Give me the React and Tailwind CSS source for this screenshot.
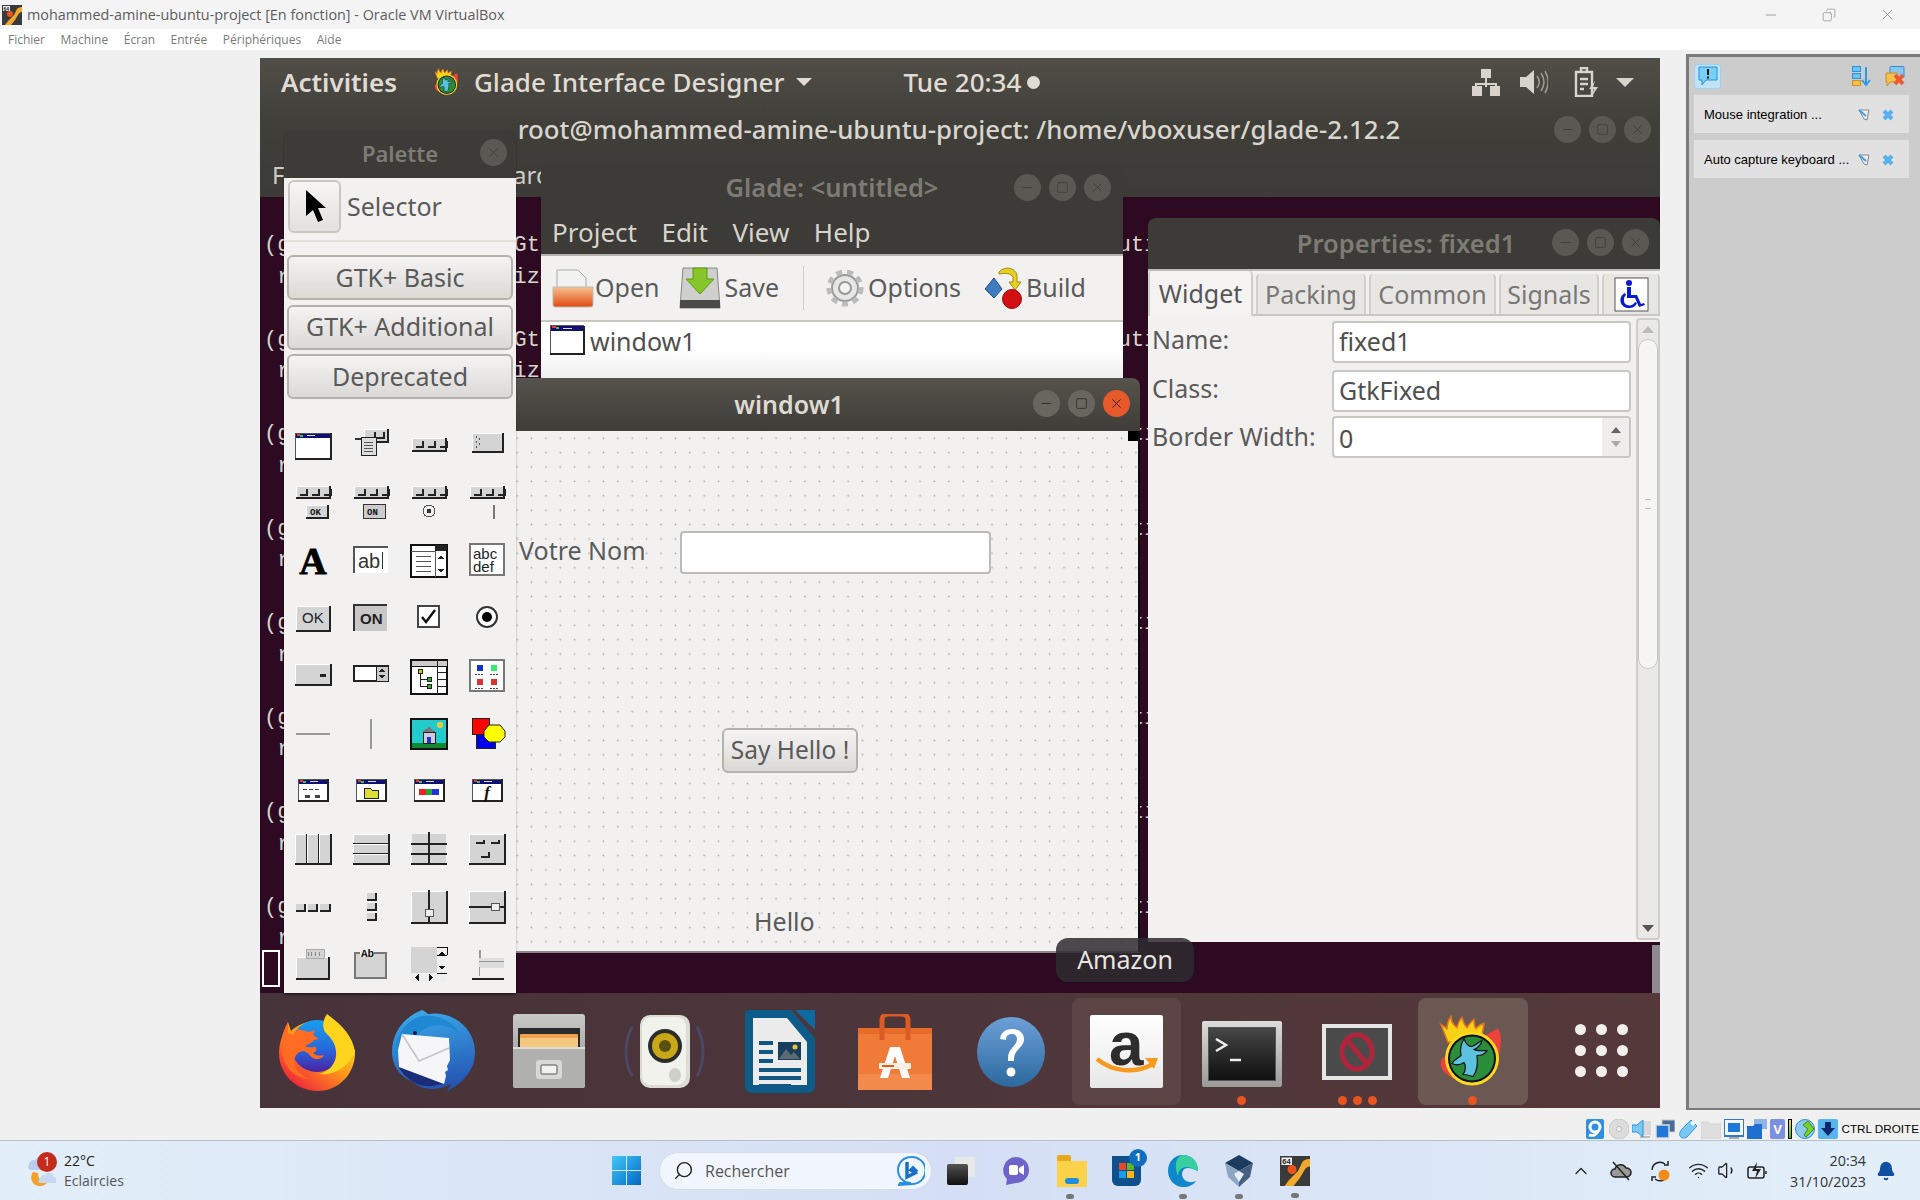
import React from 'react';
import { ChevronUp, Search, Wifi, Volume1, Bell, X, Minus, Square, Copy } from 'lucide-react';

const ubuntu = "font-['Noto_Sans',sans-serif]";
const win = "font-['Open_Sans',sans-serif]";

/* ---------- palette icons, drawn in a 44x44 box ---------- */
const Pi = ({ children }) => (
  <svg width="44" height="44" viewBox="0 0 44 44" shapeRendering="crispEdges">{children}</svg>
);
const Bev = ({ x, y, w, h }) => (
  <g>
    <rect x={x} y={y} width={w} height={h} fill="#d4d4d4" />
    <path d={`M${x} ${y + 0.5}H${x + w}M${x + 0.5} ${y}V${y + h}`} stroke="#fff" />
    <path d={`M${x} ${y + h}H${x + w}V${y}`} stroke="#222" strokeWidth="2" fill="none" />
  </g>
);
const Btns = ({ x, y, n = 3, gap = 12 }) => (
  <g>
    {Array.from({ length: n }).map((_, i) => (
      <path key={i} d={`M${x + i * gap + 7} ${y}V${y + 6}H${x + i * gap}`} stroke="#222" strokeWidth="1.6" fill="none" />
    ))}
  </g>
);
const Tb = ({ y = 5 }) => (
  <g>
    <Bev x={5} y={y} w={34} h={12} />
    <Btns x={9} y={y + 3} />
  </g>
);
const WinIco = ({ x = 4, y = 9, w = 36, h = 26, children }) => (
  <g>
    <rect x={x} y={y} width={w} height={h} fill="#fff" stroke="#555" />
    <path d={`M${x} ${y + h}H${x + w}V${y}`} stroke="#222" strokeWidth="2" fill="none" />
    <rect x={x + 1} y={y + 1} width={w - 2} height={4} fill="#101070" />
    <rect x={x + 2} y={y + 1} width={3} height={2} fill="#e33" />
    <rect x={x + 5} y={y + 2} width={3} height={2} fill="#3c3" />
    <rect x={x + 12} y={y + 2} width={8} height={1} fill="#ddd" />
    {children}
  </g>
);
const MonoT = ({ x, y, s = 12, fill = '#111', weight = 700, family = 'Liberation Mono', children }) => (
  <text x={x} y={y} fontSize={s} fill={fill} fontWeight={weight} fontFamily={family}>{children}</text>
);

const paletteIcons = [
  <WinIco key="win" />,
  <g key="menu"><Bev x={15} y={5} w={24} h={13} /><Btns x={19} y={8} n={2} gap={9} /><rect x={6} y={14} width={22} height={2} fill="#333" /><rect x={12} y={13} width={15} height={18} fill="#ddd" stroke="#222" /><path d="M15 18h9M15 21h9M15 24h9M15 27h9" stroke="#555" /></g>,
  <g key="tool"><Bev x={5} y={14} w={34} h={13} /><Btns x={9} y={17} /></g>,
  <g key="handle"><Bev x={7} y={9} w={31} h={19} /><path d="M11 12v2M11 17v2M11 22v2M14 14v2M14 19v2" stroke="#555" /></g>,

  <g key="tb-ok"><Tb /><Bev x={15} y={24} w={22} h={13} /><MonoT x={19} y={34} s={9}>OK</MonoT></g>,
  <g key="tb-on"><Tb /><rect x={14} y={23} width={22} height={14} fill="#ccc" stroke="#333" /><MonoT x={18} y={34} s={9}>ON</MonoT></g>,
  <g key="tb-radio"><Tb /><circle cx={22} cy={30} r={6} fill="#eee" stroke="#555" /><circle cx={22} cy={30} r={2.5} fill="#333" /></g>,
  <g key="tb-sep"><Tb /><rect x={28} y={24} width={2} height={14} fill="#777" /></g>,

  <text key="A" x={22} y={35} textAnchor="middle" fontSize={38} fontWeight={700} fontFamily="Liberation Serif" fill="#000" stroke="#000" strokeWidth="0.8">A</text>,
  <g key="entry"><rect x={5} y={8} width={34} height={26} fill="#fff" /><path d="M5 34V8H39" stroke="#555" strokeWidth="2" fill="none" /><text x={9} y={29} fontSize={20} fontFamily="Liberation Sans" fill="#333">ab</text><rect x={33} y={13} width={1.4} height={17} fill="#333" /></g>,
  <g key="combo"><rect x={4} y={6} width={36} height={32} fill="#fff" stroke="#111" strokeWidth="1.6" /><rect x={28} y={6} width={12} height={6} fill="#222" /><path d="M4 12H28M28 12V38M9 17h15M9 22h15M9 27h15M9 32h15" stroke="#555" /><path d="M31 20l3-4 3 4zM31 30l3 4 3-4z" fill="#222" /></g>,
  <g key="text"><rect x={5} y={5} width={34} height={31} fill="#fff" stroke="#777" strokeWidth="2" /><text x={8} y={20} fontSize={15} fontFamily="Liberation Sans" fill="#222">abc</text><text x={8} y={33} fontSize={15} fontFamily="Liberation Sans" fill="#222">def</text></g>,

  <g key="ok"><Bev x={5} y={9} w={34} h={25} /><MonoT x={11} y={26} s={15} weight={400} family="Liberation Sans" fill="#222">OK</MonoT></g>,
  <g key="on"><rect x={5} y={8} width={33} height={26} fill="#c8c8c8" /><path d="M5 34V8H38" stroke="#333" strokeWidth="2.5" fill="none" /><MonoT x={11} y={27} s={15} weight={700} family="Liberation Sans" fill="#222">ON</MonoT></g>,
  <g key="check"><rect x={11} y={9} width={21} height={21} fill="#fff" stroke="#444" strokeWidth="1.6" /><path d="M15 20l4 5 9-12" stroke="#111" strokeWidth="2.4" fill="none" shapeRendering="auto" /></g>,
  <g key="radio" shapeRendering="auto"><circle cx={22} cy={20} r={10} fill="#fff" stroke="#333" strokeWidth="2" /><circle cx={22} cy={20} r={5} fill="#000" /></g>,

  <g key="opt"><Bev x={4} y={10} w={36} h={21} /><rect x={29} y={20} width={6} height={3} fill="#222" /></g>,
  <g key="spin"><rect x={5} y={12} width={34} height={15} fill="#fff" stroke="#222" strokeWidth="1.6" /><rect x={27} y={12} width={12} height={15} fill="#ccc" stroke="#222" /><path d="M30 18l3-4 3 4zM30 21l3 4 3-4z" fill="#222" /></g>,
  <g key="tree"><rect x={4} y={6} width={36} height={34} fill="#fff" stroke="#111" strokeWidth="1.6" /><rect x={4} y={6} width={36} height={6} fill="#ccc" stroke="#111" /><path d="M30 6V40M30 18h10M30 25h10M30 32h10M13 18v14h8M13 25h8" stroke="#222" fill="none" /><rect x={11} y={15} width={4} height={4} fill="#cc0" stroke="#222" /><rect x={20} y={23} width={4} height={4} fill="#3a3" stroke="#222" /><rect x={20} y={30} width={4} height={4} fill="#3a3" stroke="#222" /></g>,
  <g key="icons"><rect x={5} y={6} width={34} height={31} fill="#fff" stroke="#777" strokeWidth="2" /><rect x={12} y={11} width={6} height={6} fill="#13c" /><rect x={26} y={11} width={6} height={6} fill="#3e6" /><rect x={12} y={25} width={6} height={6} fill="#d33" /><rect x={26} y={25} width={6} height={6} fill="#d33" /><path d="M10 20h9M25 20h9M10 34h9M25 34h9" stroke="#444" strokeDasharray="2 1" /></g>,

  <rect key="hsep" x={5} y={21} width={34} height={2} fill="#999" />,
  <rect key="vsep" x={21} y={7} width={2} height={30} fill="#999" />,
  <g key="img"><rect x={4} y={7} width={36} height={30} fill="#2cc" stroke="#111" strokeWidth="1.6" /><rect x={5} y={31} width={34} height={5} fill="#183" /><circle cx={33} cy={13} r={3} fill="#dc4" /><path d="M15 20l7-5 7 5z" fill="#777" /><rect x={16} y={20} width={12} height={11} fill="#ccd" stroke="#222" /><rect x={20} y={25} width={4} height={6} fill="#23c" /></g>,
  <g key="draw"><rect x={7} y={6} width={17} height={16} fill="#f00" stroke="#222" /><rect x={11} y={22} width={19} height={14} fill="#00e" stroke="#222" /><path d="M24 13h11l5 6v6l-5 5H24l-5-5v-6z" fill="#ff0" stroke="#222" shapeRendering="auto" /></g>,

  <WinIco key="d1" x={7} y={10} w={30} h={22}><path d="M12 20h4M18 20h4M24 20h4" stroke="#444" /><rect x={14} y={26} width={5} height={3} fill="#444" /><rect x={24} y={26} width={5} height={3} fill="#444" /></WinIco>,
  <WinIco key="d2" x={7} y={10} w={30} h={22}><path d="M15 19h6l2 2h6v8H15z" fill="#dd3" stroke="#222" /></WinIco>,
  <WinIco key="d3" x={7} y={10} w={30} h={22}><rect x={12} y={20} width={7} height={6} fill="#e22" /><rect x={19} y={20} width={6} height={6} fill="#2a3" /><rect x={25} y={20} width={7} height={6} fill="#23d" /></WinIco>,
  <WinIco key="d4" x={7} y={10} w={30} h={22}><text x={22} y={29} textAnchor="middle" fontSize={17} fontStyle="italic" fontWeight={700} fontFamily="Liberation Serif" fill="#111">f</text></WinIco>,

  <g key="hbox"><Bev x={4} y={7} w={12} h={30} /><Bev x={16} y={7} w={12} h={30} /><Bev x={28} y={7} w={12} h={30} /></g>,
  <g key="vbox"><Bev x={4} y={7} w={36} h={10} /><Bev x={4} y={17} w={36} h={10} /><Bev x={4} y={27} w={36} h={10} /></g>,
  <g key="table"><rect x={5} y={7} width={34} height={30} fill="#d4d4d4" /><path d="M4 17H40M4 27H40M4 37H40M22 5V37" stroke="#222" strokeWidth="2" /></g>,
  <g key="fixed"><Bev x={4} y={7} w={36} h={30} /><path d="M11 16h8v-3M26 16h8v-3M16 30h8v-5" stroke="#222" strokeWidth="2" fill="none" /></g>,

  <g key="hbb"><rect x={5} y={19} width={9} height={6} fill="#d4d4d4" /><path d="M5 26H14V19" stroke="#222" strokeWidth="2" fill="none" /><rect x={17} y={19} width={9} height={6} fill="#d4d4d4" /><path d="M17 26H26V19" stroke="#222" strokeWidth="2" fill="none" /><rect x={29} y={19} width={10} height={6} fill="#d4d4d4" /><path d="M29 26H39V19" stroke="#222" strokeWidth="2" fill="none" /></g>,
  <g key="vbb"><rect x={18} y={8} width={9} height={7} fill="#d4d4d4" /><path d="M18 15H27V8" stroke="#222" strokeWidth="2" fill="none" /><rect x={18} y={18} width={9} height={7} fill="#d4d4d4" /><path d="M18 25H27V18" stroke="#222" strokeWidth="2" fill="none" /><rect x={18} y={28} width={9} height={7} fill="#d4d4d4" /><path d="M18 35H27V28" stroke="#222" strokeWidth="2" fill="none" /></g>,
  <g key="vp"><Bev x={4} y={6} w={36} h={32} /><rect x={21} y={5} width={2} height={32} fill="#222" /><rect x={18} y={24} width={8} height={7} fill="#eee" stroke="#555" /></g>,
  <g key="hp"><Bev x={4} y={6} w={36} h={32} /><rect x={4} y={21} width={36} height={2} fill="#222" /><rect x={26} y={18} width={8} height={7} fill="#eee" stroke="#555" /></g>,

  <g key="nb"><Bev x={5} y={15} w={33} h={22} /><rect x={15} y={7} width={18} height={9} fill="#d4d4d4" stroke="#aaa" /><path d="M17 10v4M20 10v4M24 10v4M28 10v4" stroke="#888" /></g>,
  <g key="frame"><rect x={6} y={11} width={31} height={25} fill="#d4d4d4" stroke="#777" strokeWidth="1.6" /><rect x={11} y={6} width={14} height={9} fill="#f2f1f0" /><MonoT x={12} y={15} s={11}>Ab</MonoT></g>,
  <g key="sw"><rect x={4} y={5} width={26} height={26} fill="#d4d4d4" /><rect x={30} y={5} width={9} height={26} fill="#eee" /><rect x={4} y={31} width={36} height={9} fill="#eee" /><path d="M32 13l3-4 3 4zM32 24l3 4 3-4zM12 32v7l-4-3.500zM22 32v7l4-3.500z" fill="#111" /><path d="M30 5H40M40 5V13M30 13H40M30 31H40" stroke="#111" /></g>,
  <g key="align"><rect x={14} y={8} width={2} height={10} fill="#999" /><rect x={14} y={16} width={25} height={10} fill="#ddd" /><path d="M14 19H39M14 25V34" stroke="#999" /><rect x={7} y={36} width={32} height={2} fill="#222" /></g>,
];

/* ---------- small pieces of the desktop ---------- */
const WinBtn = ({ type, active, size = 27 }) => (
  <span
    className={`flex items-center justify-center rounded-full ${active && type === 'close' ? 'bg-[#e5592a]' : active ? 'bg-[#68665f]' : 'bg-[#5a5852]'}`}
    style={{ width: size, height: size }}
  >
    {type === 'min' && <Minus size={15} strokeWidth={1.5} color={active ? '#2f2e2a' : '#3f3e39'} />}
    {type === 'max' && <Square size={13} strokeWidth={1.5} color={active ? '#2f2e2a' : '#3f3e39'} />}
    {type === 'close' && <X size={15} strokeWidth={1.6} color={active ? '#3a1a0c' : '#3f3e39'} />}
  </span>
);

const GtkButton = ({ children, className }) => (
  <div className={`flex items-center justify-center rounded-md border-2 border-[#b4b2ad] bg-gradient-to-b from-[#f5f4f3] to-[#dbd9d6] text-[25px] text-[#5a5a5a] ${className}`}>
    {children}
  </div>
);

const GtkEntry = ({ children, className }) => (
  <div className={`flex items-center rounded border-2 border-[#c9c7c3] bg-white px-[5px] text-[25px] text-[#4f4f4f] ${className}`}>
    {children}
  </div>
);

const GladeGlobe = ({ size = 73 }) => (
  <svg width={size} height={size} viewBox="0 0 73 70">
    <path d="M62 12c6 10 2 30-6 42-8 12-28 12-38 8C8 58 2 50 6 42z" fill="#f0413a" />
    <path d="M12 26C8 16 6 10 5 8c3 2 5 3 6 5 0-5 1-9 4-13 0 6 3 9 6 11 1-4 2-7 5-10 1 4 2 7 5 10 2-3 4-6 7-8 0 4 0 7 2 9 2-3 5-4 8-5-1 5-1 9-3 14z" fill="#fbd116" stroke="#e8731a" strokeWidth="1.5" />
    <ellipse cx="36" cy="42" rx="27" ry="27" fill="#ffd820" />
    <ellipse cx="36" cy="42" rx="24" ry="24" fill="#111" />
    <ellipse cx="36" cy="42" rx="22" ry="22" fill="#2a8d3c" />
    <path d="M28 22c2 6 4 8 8 8 4-1 7-5 10-6-1 4-3 7-8 9 3 2 8 1 13 1-2 4-6 5-10 5 1 8 0 16-4 21-3-1-7-2-10-2 3-4 3-9 1-12-3 2-8 3-12 1 2-4 6-5 9-8-1-5-1-10 3-17z" fill="#5bc3e0" stroke="#111" strokeWidth="1.2" />
  </svg>
);

const VBoxIcon = ({ size = 20 }) => (
  <svg width={size} height={size} viewBox="0 0 20 20">
    <rect width="20" height="20" fill="#3a3a3a" />
    <path d="M20 2c-3 0-5 1-6 4l-2 4-6 6-3 4h6l4-5 3-5c1-2 2-3 4-3z" fill="#f0a92c" />
    <circle cx="8" cy="9" r="3" fill="#e8541a" />
    <rect x="1" y="1" width="7" height="5" fill="#eee" />
    <text x="1.500" y="5.500" fontSize="5" fontWeight="700" fontFamily="Liberation Sans" fill="#222">64</text>
  </svg>
);

/* ---------- dock icons ---------- */
const Firefox = () => (
  <svg width="78" height="78" viewBox="0 0 78 78">
    <defs>
      <linearGradient id="ff" x1="0.85" y1="0.1" x2="0.15" y2="0.9"><stop offset="0" stopColor="#ffe226" /><stop offset="0.45" stopColor="#ff9a18" /><stop offset="1" stopColor="#f0243c" /></linearGradient>
      <linearGradient id="ffb" x1="0.5" y1="0" x2="0.5" y2="1"><stop offset="0" stopColor="#17a0f0" /><stop offset="0.6" stopColor="#2a63d8" /><stop offset="1" stopColor="#4a22a0" /></linearGradient>
    </defs>
    <path d="M9 9l3 9C18 12 28 8 38 8c14 0 30 10 38 30 1 22-16 40-37 40C17 78 0 61 0 40 0 30 4 20 9 9z" fill="url(#ff)" />
    <circle cx="38" cy="33" r="26" fill="url(#ffb)" />
    <path d="M48 1c-4 6-5 12-2 18 6 6 12 12 11 24-1 9-8 16-17 18 16 2 30-8 36-22C74 22 60 10 48 1z" fill="#ffd41c" />
    <path d="M9 9c-5 8-7 20-6 30 2 16 14 27 28 27-12-4-18-14-15-22 2-4 5-6 9-6 6 2 6 7 12 8 5 0 7-2 8-4-4 1-8 1-11-2 3-1 4-3 3-6-4 0-8 1-11-1 3-2 7-3 9-6l5-1-6-4 2-5-6 2-11-3-5 6-5-2z" fill="#ff6c22" />
  </svg>
);
const Thunderbird = () => (
  <svg width="83" height="83" viewBox="0 0 83 83">
    <defs>
      <linearGradient id="tb" x1="0.4" y1="0" x2="0.6" y2="1"><stop offset="0" stopColor="#3aa8e8" /><stop offset="1" stopColor="#2350b0" /></linearGradient>
    </defs>
    <path d="M30 0c2 1 4 2 6 4 24-4 47 14 47 38 0 12-4 20-14 30l-14 10 4-8c-12 6-26 8-38-2C6 66 0 54 0 42 0 24 10 8 30 0z" fill="url(#tb)" />
    <path d="M4 40C4 22 16 10 30 6c14-2 30 4 38 18-8-8-20-10-28-8-8 2-14 6-18 14L12 26 6 50z" fill="#1e88d4" />
    <path d="M6 56c6 12 20 22 34 20l12-2L7 57z" fill="#1c2c78" />
    <path d="M10 24l47 4 1 22-3 6 1 4-3 2 1 4-2 8L7 57 6 40z" fill="#f6f6f8" />
    <path d="M10 24l17 27 30-13" stroke="#c4c4c8" strokeWidth="1.500" fill="none" />
    <circle cx="23" cy="23" r="2" fill="#10203c" />
  </svg>
);
const Files = () => (
  <svg width="74" height="76" viewBox="0 0 74 76">
    <defs>
      <linearGradient id="fi" x1="0" y1="0" x2="0" y2="1"><stop offset="0" stopColor="#c9c9c7" /><stop offset="1" stopColor="#8d8d8b" /></linearGradient>
    </defs>
    <rect x="1" y="0" width="72" height="74" rx="3" fill="url(#fi)" />
    <rect x="6" y="14" width="62" height="20" fill="#2b2b2b" />
    <rect x="8" y="20" width="58" height="15" rx="1" fill="#eea44f" />
    <rect x="8" y="24" width="58" height="11" fill="#f3c77e" />
    <rect x="1" y="33" width="72" height="41" rx="2" fill="#b0b0ae" />
    <rect x="1" y="33" width="72" height="2" fill="#dcdcdc" />
    <rect x="24" y="46" width="26" height="19" rx="3" fill="#d8d8d6" />
    <rect x="29" y="51" width="16" height="9" rx="1" fill="#f2f2f0" stroke="#555" />
  </svg>
);
const Speaker = () => (
  <svg width="81" height="73" viewBox="0 0 81 73">
    <path d="M8 12c-8 15-8 34 0 49M73 12c8 15 8 34 0 49" stroke="#4a4866" strokeWidth="3" fill="none" />
    <rect x="16" y="0" width="50" height="73" rx="10" fill="#dcdcd4" />
    <rect x="18" y="2" width="44" height="68" rx="9" fill="#f2f2ec" />
    <circle cx="41" cy="31" r="17" fill="#2c2c2c" />
    <circle cx="41" cy="31" r="13" fill="#c9a818" />
    <circle cx="41" cy="31" r="6" fill="#5a5010" />
    <ellipse cx="51" cy="60" rx="6" ry="7" fill="#d0d0ca" />
  </svg>
);
const Writer = () => (
  <svg width="70" height="83" viewBox="0 0 70 83">
    <path d="M4 0H46L70 28V76a7 7 0 0 1-7 7H7a7 7 0 0 1-7-7V4a4 4 0 0 1 4-4z" fill="#0c5b88" />
    <path d="M8 8H42L62 32V75H8z" fill="#ececec" />
    <path d="M50 0H70V20z" fill="#0c6aa0" />
    <path d="M14 31h14v4H14zM14 40h14v4H14zM14 49h14v4H14zM14 58h42v4H14zM14 66h42v4H14zM14 74h32v3H14z" fill="#12577f" />
    <rect x="33" y="32" width="23" height="18" fill="#18405c" />
    <path d="M34 49l7-10 5 6 3-3 6 7z" fill="#5d6a72" />
    <circle cx="50" cy="37" r="2.500" fill="#f0c040" />
  </svg>
);
const Store = () => (
  <svg width="74" height="76" viewBox="0 0 74 76">
    <path d="M0 14H74V76H0z" fill="#f07a38" />
    <path d="M0 14H74V20H0z" fill="#e76c2a" />
    <path d="M0 60H74V76H0z" fill="#f28a4c" />
    <path d="M24 26V6a6 6 0 0 1 6-6H44a6 6 0 0 1 6 6V26" stroke="#dc5a24" strokeWidth="5" fill="none" />
    <path d="M32 33h10l10 31H44l-7-22-7 22H22z" fill="#fff" />
    <rect x="21" y="49" width="32" height="6" rx="1" fill="#f6f0e4" />
    <rect x="24" y="51" width="12" height="2" fill="#e05a20" />
  </svg>
);
const Help = () => (
  <svg width="68" height="70" viewBox="0 0 68 70">
    <defs>
      <linearGradient id="he" x1="0" y1="0" x2="0" y2="1"><stop offset="0" stopColor="#6d9fd8" /><stop offset="1" stopColor="#2b699f" /></linearGradient>
    </defs>
    <ellipse cx="34" cy="35" rx="34" ry="35" fill="url(#he)" />
    <path d="M23 22c1-7 6-10 12-10 7 0 12 4 12 10 0 9-10 10-10 20v2h-6v-3c0-10 9-12 9-19 0-3-2-5-5-5-4 0-6 2-6 6z" fill="#fff" />
    <circle cx="34" cy="55" r="4.500" fill="#fff" />
  </svg>
);
const Amazon = () => (
  <div className="relative flex h-[73px] w-[73px] flex-col items-center rounded-[2px] bg-gradient-to-b from-white to-[#e8e8e8]">
    <span className="font-['Liberation_Sans',sans-serif] text-[62px] leading-[58px] font-bold text-[#2d2d2d]">a</span>
    <svg className="absolute bottom-[12px] left-[5px]" width="64" height="20" viewBox="0 0 64 20">
      <path d="M2 3c16 13 38 15 56 5" stroke="#f79a1e" strokeWidth="4.500" fill="none" />
      <path d="M50 2l13 0-4 11z" fill="#f79a1e" />
    </svg>
  </div>
);
const Terminal = () => (
  <div className="mt-[4px] flex h-[66px] w-[80px] rounded-[2px] bg-gradient-to-b from-[#dcdcdc] to-[#9a9a9a] p-[6px]">
    <div className="relative h-full w-full border border-[#555] bg-gradient-to-b from-[#474747] to-[#111]">
      <svg className="absolute top-[10px] left-[6px]" width="30" height="30" viewBox="0 0 30 30">
        <path d="M1 1l10 6-10 6" stroke="#eee" strokeWidth="2.500" fill="none" />
        <path d="M15 22h11" stroke="#eee" strokeWidth="2.500" />
      </svg>
    </div>
  </div>
);
const NoEntry = () => (
  <div className="flex h-[56px] w-[70px] items-center justify-center bg-[#4b4b4b] shadow-[inset_0_0_0_4px_#e6e6e6]">
    <svg width="36" height="40" viewBox="0 0 36 40">
      <ellipse cx="18" cy="20" rx="15" ry="17" stroke="#b0243c" strokeWidth="5" fill="none" />
      <path d="M8 8l20 24" stroke="#b0243c" strokeWidth="5" />
    </svg>
  </div>
);
const AppGrid = () => (
  <div className="grid grid-cols-3 gap-x-[10px] gap-y-[10px]">
    {Array.from({ length: 9 }).map((_, i) => (
      <span key={i} className="h-[11px] w-[11px] rounded-full bg-[#f2efec]" />
    ))}
  </div>
);

const DockItem = ({ children, hl, dots = 0 }) => (
  <div className={`relative mt-[5px] mx-[3px] flex h-[107px] w-[109.500px] shrink-0 items-center justify-center rounded-lg ${hl}`}>
    {children}
    {dots > 0 && (
      <div className="absolute bottom-0 flex gap-[6px]">
        {Array.from({ length: dots }).map((_, i) => (
          <span key={i} className="h-[9px] w-[9px] rounded-full bg-[#e95420]" />
        ))}
      </div>
    )}
  </div>
);

/* ---------- Glade toolbar art ---------- */
const OpenIcon = () => (
  <svg width="42" height="42" viewBox="0 0 42 42">
    <defs><linearGradient id="op" x1="0" y1="0" x2="0" y2="1"><stop offset="0" stopColor="#f9c090" /><stop offset="1" stopColor="#e04a10" /></linearGradient></defs>
    <path d="M5 3H26L34 11V24H5z" fill="#f2f2f0" stroke="#aaa" />
    <path d="M1 20H41V38a2 2 0 0 1-2 2H3a2 2 0 0 1-2-2z" fill="url(#op)" stroke="#bbb" />
  </svg>
);
const SaveIcon = () => (
  <svg width="42" height="44" viewBox="0 0 42 44">
    <path d="M4 2H38L41 42H1z" fill="#cfcfcd" stroke="#888" />
    <path d="M1 34H41V42H1z" fill="#4a4a48" />
    <path d="M14 2H28V13H35L21 28 7 13H14z" fill="#86c62a" stroke="#5e9a12" />
  </svg>
);
const GearIcon = () => (
  <svg width="38" height="40" viewBox="0 0 38 40">
    <circle cx="19" cy="20" r="13" fill="#e6e6e4" stroke="#999" strokeWidth="2" />
    <circle cx="19" cy="20" r="16" fill="none" stroke="#bbb" strokeWidth="5" strokeDasharray="6 5" />
    <circle cx="19" cy="20" r="6" fill="#f4f4f2" stroke="#999" strokeWidth="2" />
  </svg>
);
const BuildIcon = () => (
  <svg width="38" height="44" viewBox="0 0 38 44">
    <path d="M9 12L0 23l9 9 8-9z" fill="#3f7cc0" stroke="#1f4f88" />
    <path d="M14 6c5-6 16-5 18 3v7h4l-6 8-6-8h4V11c-2-4-8-4-14-3z" fill="#e8d020" stroke="#a08c10" />
    <circle cx="27" cy="33" r="9.500" fill="#d40f14" stroke="#8c0a0e" />
  </svg>
);
const MiniWin = () => (
  <svg width="36" height="32" viewBox="0 0 36 32" shapeRendering="crispEdges">
    <rect x="1" y="1" width="33" height="28" fill="#fff" stroke="#555" />
    <path d="M1 30H35V2" stroke="#222" strokeWidth="2" fill="none" />
    <rect x="2" y="2" width="32" height="5" fill="#101070" />
    <rect x="3" y="2" width="4" height="2" fill="#e33" />
    <rect x="7" y="3" width="3" height="2" fill="#3c3" />
    <rect x="14" y="4" width="9" height="1" fill="#ddd" />
  </svg>
);

/* ---------- VirtualBox status strip icons, 20x20 ---------- */
const statusIcons = [
  <g key="hd"><rect width="18" height="20" rx="2" fill="#2f8fe0" /><circle cx="9" cy="8" r="5" fill="none" stroke="#fff" strokeWidth="3" /><path d="M12 12c-1 4-5 5-9 4" stroke="#fff" strokeWidth="3" fill="none" /></g>,
  <g key="cd"><circle cx="10" cy="10" r="10" fill="#dcdcdc" stroke="#c8c8c8" /><circle cx="10" cy="10" r="2.500" fill="#f4f4f4" stroke="#bbb" /></g>,
  <g key="audio"><rect x="9" y="2" width="10" height="14" fill="#d8d8d8" /><path d="M8 18h10" stroke="#bbb" strokeWidth="2" /><path d="M0 6h5l6-5v17l-6-5H0z" fill="#7cc8f4" stroke="#2f8fe0" /></g>,
  <g key="net"><rect x="7" y="1" width="13" height="12" fill="#4a6a98" stroke="#ccc" /><rect x="1" y="6" width="13" height="13" fill="#1f78d8" stroke="#ddd" strokeWidth="1.500" /></g>,
  <g key="usb"><path d="M13 1l6 6-10 11c-3 2-6 1-7-1s0-5 2-7z" fill="#7cc8f4" stroke="#3a98e0" /><rect x="13" y="3" width="4" height="3" fill="#fff" transform="rotate(45 15 4)" /></g>,
  <path key="folder" d="M0 3h7l2 2h11v15H0z" fill="#dedede" stroke="#d0d0d0" />,
  <g key="display"><rect x="0" y="0" width="20" height="17" fill="#f6f6f6" stroke="#2f78d0" strokeWidth="2" /><rect x="4" y="4" width="12" height="9" fill="#1f78d8" /><path d="M5 19h10" stroke="#aaa" strokeWidth="2" /></g>,
  <g key="folders"><rect x="7" y="0" width="13" height="10" fill="#8fb4e8" /><path d="M0 7h6l2-2h7v15H0z" fill="#1f6fd0" /></g>,
];

const termRows = Array.from({ length: 8 });

export default function App() {
  return (
    <div className="flex h-[1200px] w-[1920px] flex-col overflow-hidden bg-[#f0f0f0]">
      {/* VirtualBox title bar */}
      <div className={`flex h-[29px] shrink-0 items-center bg-[#f4f4f4] pl-[2px] ${win}`}>
        <VBoxIcon />
        <span className="ml-[5px] text-[14.400px] text-[#5c5c5c]">mohammed-amine-ubuntu-project [En fonction] - Oracle VM VirtualBox</span>
        <div className="ml-auto flex items-center gap-[43px] pr-[24px] text-[#777]">
          <Minus size={16} strokeWidth={1} />
          <Copy size={14} strokeWidth={1} className="-scale-x-100" />
          <X size={17} strokeWidth={1} />
        </div>
      </div>

      {/* menu */}
      <div className={`flex h-[21px] shrink-0 items-center gap-[15.500px] bg-white pl-[8px] text-[12px] text-[#7a7a7a] ${win}`}>
        <span>Fichier</span>
        <span>Machine</span>
        <span>Écran</span>
        <span>Entrée</span>
        <span>Périphériques</span>
        <span>Aide</span>
      </div>

      {/* body */}
      <div className="flex h-[1060px] shrink-0 pl-[260px]">
        {/* VM screen */}
        <div className={`relative mt-[8px] flex h-[1050px] w-[1400px] shrink-0 flex-col overflow-hidden ${ubuntu}`}>
          {/* top bar and terminal title */}
          <div className="h-[139px] shrink-0 bg-gradient-to-b from-[#514e47] via-[#3f3e39] to-[#3c3b37]">
            <div className="flex h-[48px] items-center text-[#e0dcd4]">
              <span className="ml-[21px] text-[26px] font-semibold">Activities</span>
              <span className="ml-[36px]"><GladeGlobe size={28} /></span>
              <span className="ml-[13px] text-[26px] font-medium">Glade Interface Designer</span>
              <span className="ml-[11px] h-0 w-0 border-x-[8px] border-t-[8px] border-x-transparent border-t-[#e0dcd4]" />
              <span className="ml-[92px] text-[26px] font-medium">Tue 20:34</span>
              <span className="ml-[6px] h-[13px] w-[13px] rounded-full bg-[#e0dcd4]" />
              <div className="ml-auto flex items-center pr-[26px]">
                <svg width="28" height="27" viewBox="0 0 28 27" fill="#d8d4cc"><rect x="9" y="0" width="10" height="9" /><path d="M13 9h2v5h10v4h-2v-2H15v2h-2v-2H5v2H3v-4h10z" /><rect x="0" y="17" width="10" height="10" /><rect x="18" y="17" width="10" height="10" /></svg>
                <svg className="ml-[20px]" width="28" height="26" viewBox="0 0 28 26" fill="#d8d4cc"><path d="M0 8h6l8-7v24l-8-7H0z" /><path d="M17 7c3 4 3 8 0 12M21 4c4 6 4 12 0 18M25 2c4 7 4 15 0 22" stroke="#a09c94" strokeWidth="1.500" fill="none" /></svg>
                <svg className="ml-[25px]" width="26" height="30" viewBox="0 0 26 30" fill="none" stroke="#d8d4cc" strokeWidth="2.400"><path d="M3 5h16v24H3zM8 5V1h6v4M7 12h8M7 17h8M7 22h4" /><path d="M22 14l-6 8h5l-2 7 6-9h-5z" fill="#d8d4cc" stroke="none" /></svg>
                <span className="ml-[17px] h-0 w-0 border-x-[9px] border-t-[9px] border-x-transparent border-t-[#d8d4cc]" />
              </div>
            </div>
            <div className="relative flex h-[46px] items-center justify-center text-[25.800px] font-medium text-[#d9d5cc]">
              <span className="mr-[2px]">root@mohammed-amine-ubuntu-project: /home/vboxuser/glade-2.12.2</span>
              <div className="absolute top-[10px] right-[9px] flex gap-[8px]">
                <WinBtn type="min" />
                <WinBtn type="max" />
                <WinBtn type="close" />
              </div>
            </div>
            <div className="flex h-[45px] items-center pl-[12px] text-[24px] text-[#d0ccc4]">
              <span>File</span>
              <span className="ml-[176px]">Search</span>
            </div>
          </div>

          {/* terminal output, mostly covered by windows */}
          <div className="h-[796px] shrink-0 overflow-hidden bg-[#2d0922] pt-[33px] pl-[4px] font-['Liberation_Mono',monospace] text-[21.900px] leading-[31.500px] whitespace-pre text-[#d3d7cf]">
            {termRows.map((_, i) => (
              <div key={i}>
                <div>(glade-2:1234567): Gtk-WARNING **: Could not load a pixbuf from /utils</div>
                <div> requested pixbuf size</div>
                <div>&nbsp;</div>
              </div>
            ))}
          </div>

          {/* dock */}
          <div className="flex h-[115px] shrink-0 bg-gradient-to-r from-[#47333a] via-[#4d363a] to-[#55393a]">
            <DockItem><Firefox /></DockItem>
            <DockItem><Thunderbird /></DockItem>
            <DockItem><Files /></DockItem>
            <DockItem><Speaker /></DockItem>
            <DockItem><Writer /></DockItem>
            <DockItem><Store /></DockItem>
            <DockItem><Help /></DockItem>
            <DockItem hl="bg-[#5d4545]"><Amazon /></DockItem>
            <DockItem dots={1}><Terminal /></DockItem>
            <DockItem dots={3}><NoEntry /></DockItem>
            <DockItem hl="bg-[#6c5853]" dots={1}><GladeGlobe /></DockItem>
            <div className="ml-[13px] flex h-[115px] w-[115px] items-center justify-center"><AppGrid /></div>
          </div>

          {/* terminal scrollbar and cursor */}
          <div className="absolute top-[887px] right-0 h-[48px] w-[8px] bg-[#8f8a8f]" />
          <div className="absolute top-[892px] left-[2px] h-[37px] w-[18px] border-2 border-white" />

          {/* window1 */}
          <div className="absolute top-[320px] left-[178px] flex h-[575px] w-[702px] flex-col overflow-hidden rounded-t-lg">
            <div className="relative flex h-[53px] shrink-0 items-center justify-center bg-gradient-to-b from-[#56534c] to-[#3e3d38]">
              <span className="text-[25px] font-semibold text-[#dfdbd2]">window1</span>
              <div className="absolute top-[12px] right-[10px] flex gap-[8px]">
                <WinBtn type="min" active />
                <WinBtn type="max" active />
                <WinBtn type="close" active />
              </div>
            </div>
            <div className="relative flex-1 border-r-2 border-b-2 border-r-[#0c0c0c] border-b-[#888] bg-[#f2f1f0] bg-[radial-gradient(circle,#b0b0b0_0.800px,transparent_1.100px)] bg-[size:14.400px_14.400px] text-[25px] text-[#5a5a5a]">
              <div className="absolute top-0 right-0 h-[10px] w-[10px] bg-black" />
              <span className="absolute top-[101px] left-[81px]">Votre Nom</span>
              <div className="absolute top-[100px] left-[242px] h-[43px] w-[311px] rounded border-2 border-[#bdbbb7] bg-white" />
              <GtkButton className="absolute top-[297px] left-[284px] h-[45px] w-[136px] !text-[24.500px]">Say Hello !</GtkButton>
              <span className="absolute top-[472px] left-[316px]">Hello</span>
            </div>
          </div>

          {/* Glade main window */}
          <div className="absolute top-[105px] left-[281px] flex h-[215px] w-[582px] flex-col overflow-hidden rounded-t-lg">
            <div className="relative flex h-[48px] shrink-0 items-center justify-center bg-[#3c3b37] pt-[1px] text-[25.500px] font-semibold text-[#7d7b74]">
              Glade: &lt;untitled&gt;
              <div className="absolute top-[11px] right-[12px] flex gap-[8px]">
                <WinBtn type="min" />
                <WinBtn type="max" />
                <WinBtn type="close" />
              </div>
            </div>
            <div className="flex h-[43px] shrink-0 items-center gap-[24.500px] bg-[#3c3b37] pl-[11px] text-[26px] text-[#d8d4cb]">
              <span>Project</span>
              <span>Edit</span>
              <span>View</span>
              <span>Help</span>
            </div>
            <div className="flex h-[68px] shrink-0 items-center border-t-2 border-b-2 border-t-[#b5b3ae] border-b-[#c9c7c3] bg-[#f2f1f0] pl-[11px] text-[25px] text-[#5a5a5a]">
              <OpenIcon />
              <span className="ml-[1px]">Open</span>
              <span className="ml-[20px]"><SaveIcon /></span>
              <span className="ml-[3px]">Save</span>
              <span className="ml-[24px] h-[44px] w-[1px] bg-[#cfcdc9]" />
              <span className="ml-[22px]"><GearIcon /></span>
              <span className="ml-[4px]">Options</span>
              <span className="ml-[24px]"><BuildIcon /></span>
              <span className="ml-[3px]">Build</span>
            </div>
            <div className="flex flex-1 items-start bg-gradient-to-b from-white via-white to-[#eeeeee] pt-[2px] pl-[8px] text-[25px] text-[#4f4f4f]">
              <MiniWin />
              <span className="ml-[5px] leading-[34px]">window1</span>
            </div>
          </div>

          {/* Palette */}
          <div className="absolute top-[72px] left-[24px] flex h-[863px] w-[232px] flex-col overflow-hidden rounded-t-lg shadow-[0_2px_2px_rgba(0,0,0,.4)]">
            <div className="relative flex h-[48px] shrink-0 items-center justify-center bg-[#3c3b37] pb-[2px] text-[22px] font-semibold text-[#7d7b74]">
              Palette
              <div className="absolute top-[9px] right-[9px]"><WinBtn type="close" /></div>
            </div>
            <div className="flex-1 bg-[#f2f1f0] text-[#5a5a5a]">
              <div className="flex h-[64px] items-center border-b-2 border-[#e2e0dd] pb-[5px] pl-[4px]">
                <div className="flex h-[53px] w-[53px] items-center justify-center rounded-md border-2 border-[#c9c7c3] bg-gradient-to-b from-[#f6f5f4] to-[#e3e1de]">
                  <svg width="24" height="36" viewBox="0 0 24 36"><path d="M3 1v26l7-6 5 12 5-2-5-12h8z" fill="#000" /></svg>
                </div>
                <span className="ml-[6px] text-[25px]">Selector</span>
              </div>
              <div className="flex flex-col gap-[4.500px] px-[3px] pt-[13px]">
                <GtkButton className="h-[45px]">GTK+ Basic</GtkButton>
                <GtkButton className="h-[45px]">GTK+ Additional</GtkButton>
                <GtkButton className="h-[45px]">Deprecated</GtkButton>
              </div>
              <div className="grid grid-cols-4 auto-rows-[57.600px] pt-[18px]">
                {paletteIcons.map((ic, i) => (
                  <div key={i} className="flex h-[57.600px] items-center justify-center"><Pi>{ic}</Pi></div>
                ))}
              </div>
            </div>
          </div>

          {/* Properties */}
          <div className="absolute top-[160px] left-[888px] flex h-[724px] w-[512px] flex-col overflow-hidden rounded-t-lg">
            <div className="relative flex h-[51px] shrink-0 items-center justify-center bg-[#3c3b37] pl-[4px] text-[25.500px] font-semibold text-[#7d7b74]">
              Properties: fixed1
              <div className="absolute top-[11px] right-[11px] flex gap-[8px]">
                <WinBtn type="min" />
                <WinBtn type="max" />
                <WinBtn type="close" />
              </div>
            </div>
            <div className="flex flex-1 flex-col bg-[#f2f1f0] text-[25px] text-[#5a5a5a]">
              <div className="flex h-[47px] shrink-0 items-end gap-[3px] border-t-2 border-b-2 border-t-[#bdbbb7] border-b-[#c9c7c3] text-[#777]">
                <div className="flex h-[45px] w-[105px] -mb-[2px] items-center justify-center rounded-t border-x-2 border-[#d0cec9] bg-[#f4f3f2] pt-[1px] text-[#555]">Widget</div>
                <div className="flex h-[40px] w-[110px] items-center justify-center rounded-t border-x-2 border-[#d0cec9] bg-[#e8e6e3] pt-[1px]">Packing</div>
                <div className="flex h-[40px] w-[127px] items-center justify-center rounded-t border-x-2 border-[#d0cec9] bg-[#e8e6e3] pt-[1px]">Common</div>
                <div className="flex h-[40px] w-[100px] items-center justify-center rounded-t border-x-2 border-[#d0cec9] bg-[#e8e6e3] pt-[1px]">Signals</div>
                <div className="flex h-[40px] flex-1 items-center justify-center rounded-t border-x-2 border-[#d0cec9] bg-[#e8e6e3]">
                  <svg width="35" height="35" viewBox="0 0 35 35">
                    <rect x="1" y="1" width="33" height="33" fill="#fff" stroke="#555" />
                    <circle cx="15" cy="6" r="3" fill="#0a1ad0" />
                    <path d="M13 10h4v8h6l4 9 3-1 1 2-6 2-4-9h-8zM11 16c-8 4-5 16 5 15 4 0 6-3 7-5l-2-1c-2 5-12 5-11-3 0-2 1-3 2-4z" fill="#0a1ad0" />
                  </svg>
                </div>
              </div>
              <div className="flex flex-1">
                <div className="flex-1 pt-[4px] pl-[4px]">
                  <div className="flex h-[49px] items-start"><span className="w-[180px] leading-[38px]">Name:</span><GtkEntry className="mt-[1px] h-[42px] w-[299px]">fixed1</GtkEntry></div>
                  <div className="flex h-[49px] items-start"><span className="w-[180px] leading-[38px]">Class:</span><GtkEntry className="mt-[1px] h-[42px] w-[299px]">GtkFixed</GtkEntry></div>
                  <div className="-mt-[2px] flex h-[49px] items-start">
                    <span className="w-[180px] leading-[40px]">Border Width:</span>
                    <div className="flex h-[42px] w-[299px] items-stretch overflow-hidden rounded border-2 border-[#c9c7c3] bg-white">
                      <span className="flex-1 pl-[5px] leading-[40px] text-[#4f4f4f]">0</span>
                      <div className="flex w-[27px] flex-col items-center justify-center gap-[8px] bg-[#eeedeb]">
                        <span className="h-0 w-0 border-x-[5px] border-b-[6px] border-x-transparent border-b-[#666]" />
                        <span className="h-0 w-0 border-x-[5px] border-t-[6px] border-x-transparent border-t-[#aaa]" />
                      </div>
                    </div>
                  </div>
                </div>
                <div className="mt-[2px] mb-[2px] flex w-[24px] flex-col items-center rounded border-2 border-[#d0cec9] bg-[#ebe9e7] pt-[6px]">
                  <span className="h-0 w-0 border-x-[6px] border-b-[7px] border-x-transparent border-b-[#bbb]" />
                  <div className="mt-[6px] flex h-[330px] w-[20px] items-center justify-center rounded-full border border-[#c9c7c3] bg-[#f6f5f4] text-[8px] leading-[3px] text-[#aaa]">
                    <span className="h-[10px] w-[6px] border-y border-[#bbb]" />
                  </div>
                  <span className="mt-auto mb-[6px] h-0 w-0 border-x-[6px] border-t-[7px] border-x-transparent border-t-[#555]" />
                </div>
              </div>
            </div>
          </div>

          {/* dock tooltip */}
          <div className="absolute top-[880px] left-[796px] flex h-[44px] w-[138px] items-center justify-center rounded-xl bg-[#2e2c2e]/85 text-[25px] text-[#e8e6e2]">
            Amazon
          </div>
        </div>

        {/* notification side panel */}
        <div className="mt-[4px] ml-[26px] flex h-[1056px] w-[234px] shrink-0 flex-col border-t-[3px] border-b-[2px] border-l-[3px] border-[#7c7c7c] bg-[#cccccc] pr-[11px] pl-[5px] font-['Liberation_Sans',sans-serif] text-[13px] text-black">
          <div className="flex h-[38px] items-center">
            <div className="flex h-[25px] w-[27px] items-center justify-center rounded-[3px] border border-[#9fd0f0] bg-[#bfe4fa]">
              <svg width="20" height="20" viewBox="0 0 20 20"><path d="M1 1h18v13H8l-4 5v-5H1z" fill="#78d0f4" stroke="#2f8fd8" /><path d="M10 3v6M10 10.500v2" stroke="#111" strokeWidth="2" /></svg>
            </div>
            <svg className="ml-auto mr-[13px]" width="20" height="21" viewBox="0 0 20 21"><rect x="0.500" y="0.500" width="8" height="5" fill="#6cc4f0" stroke="#2f8fd8" /><rect x="0.500" y="7.500" width="8" height="5" fill="#6cc4f0" stroke="#2f8fd8" /><rect x="0.500" y="14.500" width="8" height="5" fill="#f4c050" stroke="#d09020" /><path d="M14 1v17M10 14l4 5 4-5" stroke="#2e9be0" strokeWidth="2" fill="none" /></svg>
            <svg className="mr-[4px]" width="20" height="21" viewBox="0 0 20 21"><rect x="5" y="0.500" width="14" height="11" rx="1" fill="#8cc4f0" stroke="#2f8fd8" /><path d="M1 7h11v9H5l-3 4v-4H1z" fill="#f4c050" stroke="#d09020" /><path d="M10 9l8 9M18 9l-8 9" stroke="#ee5a30" strokeWidth="4" /></svg>
          </div>
          <div className="flex h-[38px] items-center justify-between bg-[#e1e1e1] pr-[15px] pl-[10px] pt-[1px]">
            <span>Mouse integration ...</span>
            <span className="flex gap-[12px]">
              <svg width="12" height="12" viewBox="0 0 12 12"><path d="M1 1h10l-2 10-3-1z" fill="#eee" stroke="#888" /><path d="M1 1l7 6" stroke="#3ba0e8" strokeWidth="2" /></svg>
              <svg width="12" height="12" viewBox="0 0 12 12"><path d="M2 2l8 8M10 2l-8 8" stroke="#58b0ee" strokeWidth="4" /></svg>
            </span>
          </div>
          <div className="mt-[7px] flex h-[38px] items-center justify-between bg-[#e1e1e1] pr-[15px] pl-[10px] pt-[1px]">
            <span>Auto capture keyboard ...</span>
            <span className="flex gap-[12px]">
              <svg width="12" height="12" viewBox="0 0 12 12"><path d="M1 1h10l-2 10-3-1z" fill="#eee" stroke="#888" /><path d="M1 1l7 6" stroke="#3ba0e8" strokeWidth="2" /></svg>
              <svg width="12" height="12" viewBox="0 0 12 12"><path d="M2 2l8 8M10 2l-8 8" stroke="#58b0ee" strokeWidth="4" /></svg>
            </span>
          </div>
        </div>
      </div>

      {/* VirtualBox status strip */}
      <div className="mt-[8px] flex h-[22px] shrink-0 items-center justify-end gap-[3px] pr-[1px] font-['Liberation_Sans',sans-serif] text-[11.700px] text-black">
        {statusIcons.map((ic, i) => (
          <svg key={i} width="20" height="20" viewBox="0 0 20 20">{ic}</svg>
        ))}
        <svg width="15" height="20" viewBox="0 0 15 20"><rect width="15" height="20" rx="2" fill="#7c90e0" /><text x="7.500" y="15" textAnchor="middle" fontSize="13" fontWeight="700" fontFamily="Liberation Sans" fill="#fff">V</text></svg>
        <span className="h-[20px] w-[4px] border border-black bg-gradient-to-b from-[#e8e020] to-[#20c020]" />
        <svg width="20" height="20" viewBox="0 0 20 20"><circle cx="10" cy="10" r="9.500" fill="#8cc8f0" stroke="#2f8fd8" /><path d="M8 6l5-4 6 8-8 8-2-2 4-6z" fill="#7ad02c" stroke="#3f9010" /></svg>
        <svg width="20" height="20" viewBox="0 0 20 20"><rect width="20" height="20" rx="2" fill="#58b4ee" /><path d="M7 3h6v6h4l-7 8-7-8h4z" fill="#0a2a6c" /></svg>
        <span className="ml-[1px]">CTRL DROITE</span>
      </div>

      {/* Windows taskbar */}
      <div className={`flex h-[60px] shrink-0 items-center border-t border-[#b9c0cc] bg-gradient-to-r from-[#e2eef8] via-[#d4dff5] to-[#e3eff8] ${win}`}>
        <div className="ml-[26px] flex w-[586px] shrink-0 items-center">
          <div className="relative h-[36px] w-[30px]">
            <svg width="30" height="36" viewBox="0 0 30 36">
              <path d="M3 12a5 5 0 0 1 6-5 6 6 0 0 1 11 3 4 4 0 0 1 0 7H4a3 3 0 0 1-1-5z" fill="#b8cdf0" />
              <path d="M12 20c0 7 5 10 10 8-2 5-9 7-14 3-3-3-4-8-1-12z" fill="#f2a02c" />
              <path d="M14 26a4 4 0 0 1 5-4 5 5 0 0 1 9 2 3 3 0 0 1 0 6H15a2 2 0 0 1-1-4z" fill="#c6d8f4" />
            </svg>
            <span className="absolute -top-[1px] left-[11px] flex h-[20px] w-[20px] items-center justify-center rounded-full bg-[#c42b1c] text-[12px] text-white">1</span>
          </div>
          <div className="ml-[8px] flex flex-col text-[14px] leading-[20px]">
            <span className="text-[#222]">22°C</span>
            <span className="text-[#555]">Eclaircies</span>
          </div>
        </div>
        <svg width="29" height="29" viewBox="0 0 29 29">
          <defs><linearGradient id="wl" x1="0" y1="0" x2="1" y2="1"><stop offset="0" stopColor="#45c8f8" /><stop offset="1" stopColor="#0068c4" /></linearGradient></defs>
          <path d="M0 0h14v14H0zM15 0h14v14H15zM0 15h14v14H0zM15 15h14v14H15z" fill="url(#wl)" />
        </svg>
        <div className="ml-[18px] flex h-[38px] w-[273px] items-center rounded-full border border-[#d6dde8] bg-[#f1f5fd] pl-[13px] text-[16px] text-[#555]">
          <Search size={21} strokeWidth={1.6} className="-scale-x-100 text-[#222]" />
          <span className="ml-[11px]">Rechercher</span>
          <svg className="ml-auto mr-[6px]" width="28" height="30" viewBox="0 0 28 30">
            <path d="M14 1a13 13 0 1 0 0 26H3l-1 2 14-1A13 13 0 0 0 14 1z" fill="#eef6fe" stroke="#2a8fe0" strokeWidth="2" />
            <path d="M10 6v15l8-4-4-3 2-2 4 4" stroke="#1a6ec8" strokeWidth="3.500" fill="none" />
          </svg>
        </div>

        {/* pinned apps */}
        <div className="ml-[15px] flex h-full items-center gap-[27px]">
          <div className="relative flex h-[28px] w-[28px] items-center justify-center">
            <span className="absolute top-0 right-0 h-[20px] w-[20px] bg-[#e8e8e8]" />
            <span className="absolute bottom-0 left-0 h-[21px] w-[21px] rounded-[2px] bg-gradient-to-b from-[#555] to-[#111]" />
          </div>
          <div className="relative flex h-[28px] w-[28px] items-center justify-center">
            <svg width="28" height="30" viewBox="0 0 28 30"><path d="M14 1a13 13 0 0 1 13 13 13 13 0 0 1-13 13l-10 2 1-6A13 13 0 0 1 14 1z" fill="#6f62c8" /><rect x="7" y="9" width="9" height="10" rx="2" fill="#fff" /><path d="M17 12l5-3v10l-5-3z" fill="#fff" /></svg>
          </div>
          <div className="relative flex h-[32px] w-[28px] flex-col">
            <span className="h-[6px] w-[14px] rounded-t-[2px] bg-[#e8a91c]" />
            <span className="flex h-[26px] w-[30px] items-end justify-center bg-[#fcd24a] pb-[3px]"><span className="h-[6px] w-[14px] rounded-sm bg-[#1c8fe0]" /></span>
            <span className="absolute -bottom-[12px] left-[9px] h-[5px] w-[8px] rounded-full bg-[#777]" />
          </div>
          <div className="relative flex h-[30px] w-[29px] flex-wrap content-center justify-center gap-[1px] rounded-b-md bg-[#0f4f8c] px-[6px]">
            <span className="h-[7px] w-[7px] bg-[#e5452c]" /><span className="h-[7px] w-[7px] bg-[#62b32c]" /><span className="h-[7px] w-[7px] bg-[#1e9be8]" /><span className="h-[7px] w-[7px] bg-[#f7b51c]" />
            <span className="absolute -top-[7px] -right-[6px] flex h-[18px] w-[18px] items-center justify-center rounded-full bg-[#106ebe] text-[11px] font-bold text-white">1</span>
          </div>
          <div className="relative flex h-[32px] w-[30px] items-center justify-center">
            <svg width="30" height="32" viewBox="0 0 30 32">
              <path d="M15 0C6 0 0 7 0 16c0 9 7 16 15 16 6 0 10-2 13-6-6 3-14 0-14-7 0-3 2-6 6-6 5 0 9 3 10 3 0-9-6-16-15-16z" fill="#0f87c8" />
              <path d="M15 0c9 0 15 7 15 15-2 2-6-3-11-3-6 0-9 4-9 9C7 14 6 2 15 0z" fill="#38d0a0" />
            </svg>
            <span className="absolute -bottom-[12px] left-[11px] h-[5px] w-[8px] rounded-full bg-[#777]" />
          </div>
          <div className="relative flex h-[32px] w-[28px] items-center justify-center">
            <svg width="28" height="32" viewBox="0 0 28 32">
              <path d="M14 0l14 8-14 8L0 8z" fill="#1d3b5c" />
              <path d="M0 8l14 8v16L3 22z" fill="#8ea6c4" />
              <path d="M28 8l-14 8v16l11-10z" fill="#475f80" />
              <path d="M14 16l-5 3 5 8 5-8z" fill="#e8eef6" />
            </svg>
            <span className="absolute -bottom-[12px] left-[10px] h-[5px] w-[8px] rounded-full bg-[#777]" />
          </div>
          <div className="relative">
            <VBoxIcon size={30} />
            <span className="absolute -bottom-[12px] left-[11px] h-[5px] w-[8px] rounded-full bg-[#777]" />
          </div>
        </div>

        {/* tray */}
        <div className="ml-auto flex items-center pr-[24px] text-[#222]">
          <ChevronUp size={20} strokeWidth={1.5} />
          <svg className="ml-[19px]" width="22" height="22" viewBox="0 0 22 22" fill="none" stroke="#222" strokeWidth="1.500"><path d="M5 17a4 4 0 0 1 0-8 6 6 0 0 1 11-1 4 4 0 0 1 1 9z" fill="#9a9a9a" /><path d="M3 2l16 18" /></svg>
          <svg className="ml-[17px]" width="22" height="24" viewBox="0 0 22 24" fill="none" stroke="#222" strokeWidth="1.500"><path d="M3 11a8 8 0 0 1 13-6M19 2v4h-4M19 14a8 8 0 0 1-13 6M3 22v-4h4" /><circle cx="15" cy="16" r="5.500" fill="#f08a18" stroke="none" /></svg>
          <Wifi className="ml-[17px]" size={21} strokeWidth={1.6} />
          <Volume1 className="ml-[8px]" size={21} strokeWidth={1.5} />
          <svg className="ml-[8px]" width="22" height="20" viewBox="0 0 22 20" fill="none" stroke="#222" strokeWidth="1.500"><rect x="2" y="6" width="16" height="11" rx="2" /><path d="M20 10v3" /><path d="M11 1l-5 9h5l-2 8 6-10h-5z" fill="#222" stroke="none" /></svg>
          <div className="ml-[22px] flex flex-col items-end text-[14.300px] leading-[21px] text-[#333]">
            <span>20:34</span>
            <span>31/10/2023</span>
          </div>
          <Bell className="ml-[10px] text-[#0f4fa0]" size={20} fill="#0f4fa0" />
        </div>
      </div>
    </div>
  );
}
